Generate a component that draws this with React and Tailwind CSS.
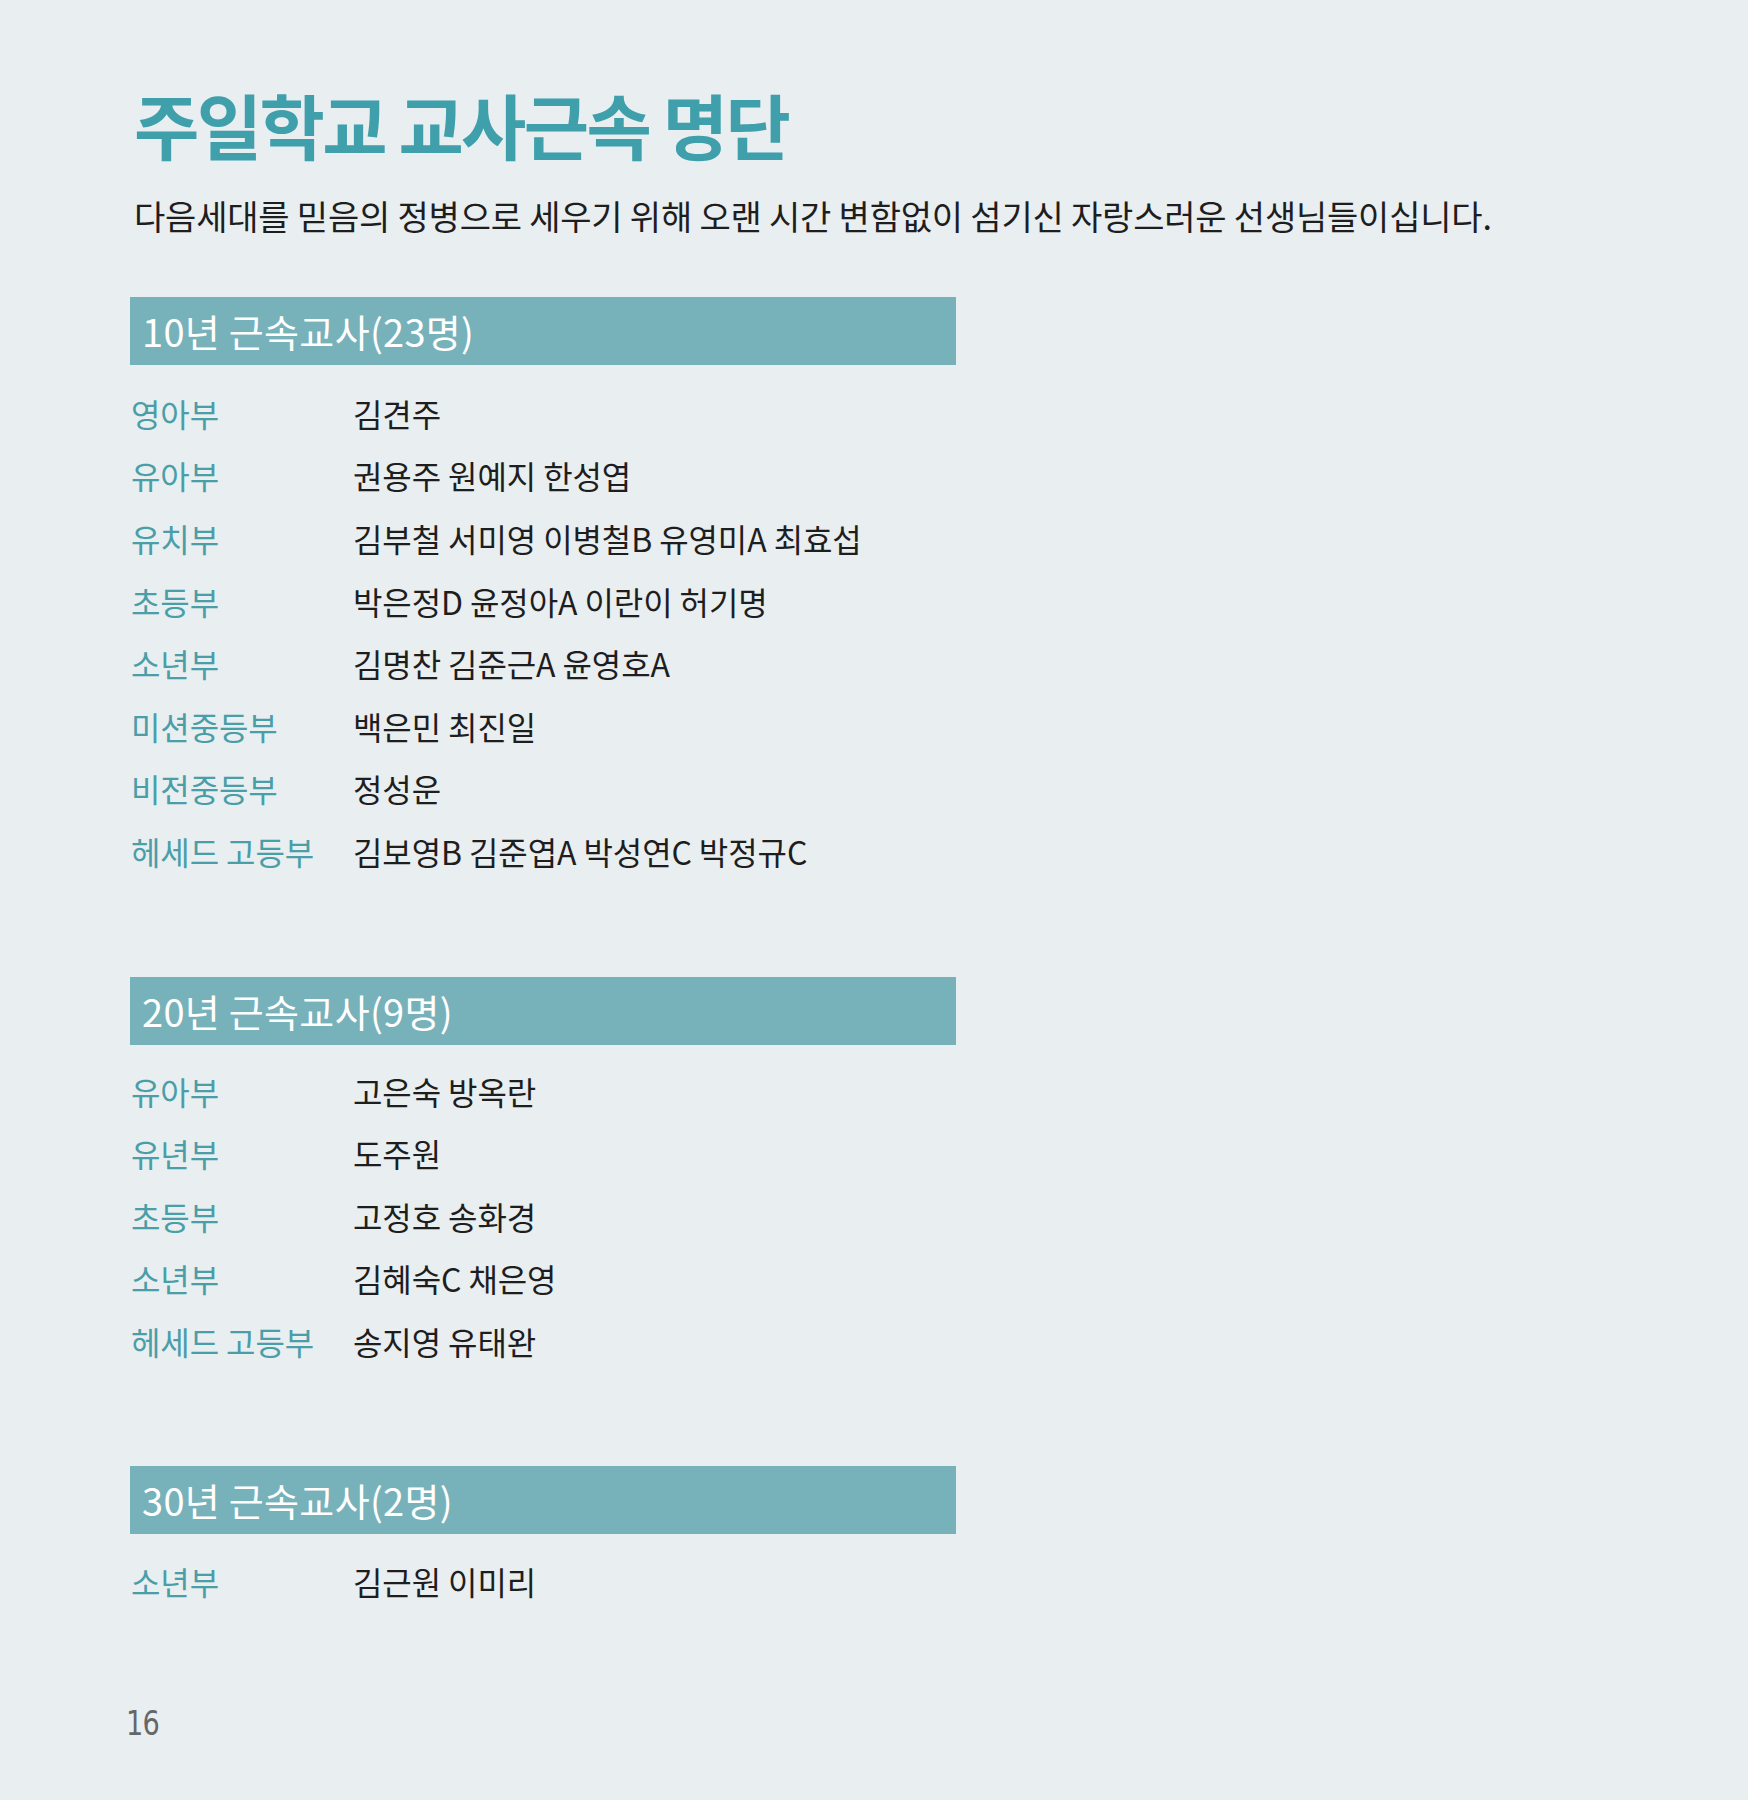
import React from "react";

const sections = [
  {
    title: "10년 근속교사(23명)",
    mt: "mt-[64px]",
    rowsMt: "mt-[16.5px]",
    rows: [
      ["영아부", "김견주"],
      ["유아부", "권용주 원예지 한성엽"],
      ["유치부", "김부철 서미영 이병철B 유영미A 최효섭"],
      ["초등부", "박은정D 윤정아A 이란이 허기명"],
      ["소년부", "김명찬 김준근A 윤영호A"],
      ["미션중등부", "백은민 최진일"],
      ["비전중등부", "정성운"],
      ["헤세드 고등부", "김보영B 김준엽A 박성연C 박정규C"],
    ],
  },
  {
    title: "20년 근속교사(9명)",
    mt: "mt-[94.5px]",
    rowsMt: "mt-[14.5px]",
    rows: [
      ["유아부", "고은숙 방옥란"],
      ["유년부", "도주원"],
      ["초등부", "고정호 송화경"],
      ["소년부", "김혜숙C 채은영"],
      ["헤세드 고등부", "송지영 유태완"],
    ],
  },
  {
    title: "30년 근속교사(2명)",
    mt: "mt-[93.5px]",
    rowsMt: "mt-[16px]",
    rows: [["소년부", "김근원 이미리"]],
  },
];

export default function App() {
  return (
    <div className="min-h-[1800px] w-full bg-[#e9eef1] font-['Noto_Sans_CJK_KR','Noto_Sans',sans-serif] pl-[130px] pt-[88px]">
      <h1 className="ml-[4px] text-[71px] leading-none font-bold tracking-[-2.6px] text-[#3f9fab]">
        주일학교 교사근속 명단
      </h1>
      <p className="ml-[4px] mt-[40px] text-[34px] leading-none tracking-[-0.2px] text-[#1e1e1e]">
        다음세대를 믿음의 정병으로 세우기 위해 오랜 시간 변함없이 섬기신 자랑스러운 선생님들이십니다.
      </p>

      {sections.map((s) => (
        <section key={s.title} className={s.mt}>
          <div className="flex h-[68px] w-[826px] items-center bg-[#77b2ba] pl-[12px]">
            <span className="text-[38px] leading-none tracking-[0.3px] text-white">
              {s.title}
            </span>
          </div>
          <div className={s.rowsMt}>
            {s.rows.map(([label, names]) => (
              <div key={label + names} className="flex h-[62.6px] items-center pl-[1px] text-[32px] leading-none tracking-[-0.1px]">
                <span className="w-[222px] shrink-0 text-[#4a9ea8]">{label}</span>
                <span className="text-[#1e1e1e]">{names}</span>
              </div>
            ))}
          </div>
        </section>
      ))}

      <div className="mt-[94px] -ml-[4px]">
        <span className="inline-block origin-left scale-x-[0.8] font-['Liberation_Sans_Narrow','DejaVu_Sans',sans-serif] text-[34px] leading-none tracking-[-1px] text-[#666666]">
          16
        </span>
      </div>
    </div>
  );
}
